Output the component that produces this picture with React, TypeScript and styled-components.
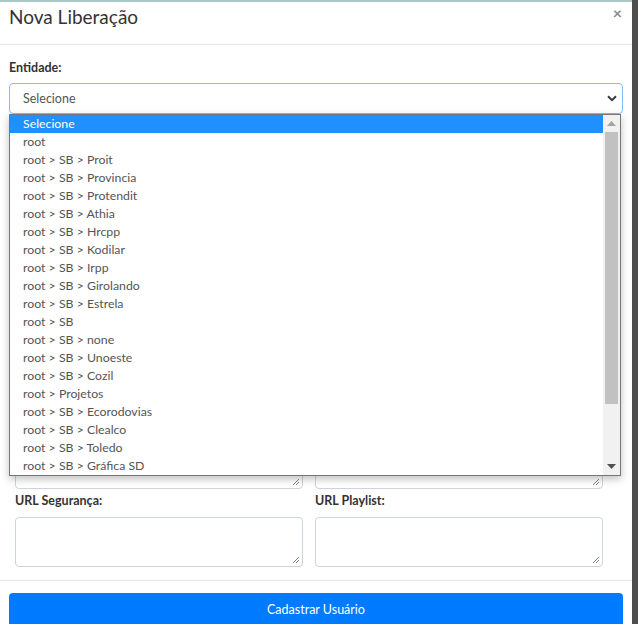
import React from 'react'
import styled, { createGlobalStyle } from 'styled-components'

const GlobalStyle = createGlobalStyle`
    html, body {
        margin: 0;
        padding: 0;
        background: #4e4e4e;
        font-family: 'Lato', 'Open Sans', sans-serif;
        color: #333;
    }
    * { box-sizing: border-box; }
`

const Modal = styled.div`
    position: relative;
    width: 632px;
    height: 624px;
    background: #fff;
    border-top: 2px solid #a9c6c9;
    overflow: hidden;
`

const Header = styled.div`
    display: flex;
    justify-content: space-between;
    align-items: flex-start;
    height: 43px;
    padding: 3px 10px 0 9px;
    border-bottom: 1px solid #e5e5e5;

    h4 {
        margin: 0;
        font-size: 19px;
        font-weight: 400;
        color: #333;
        line-height: 24px;
    }
`

const Close = styled.span`
    font-size: 16px;
    font-weight: 700;
    color: #8a8a8a;
    line-height: 14px;
    margin-top: 1px;
    cursor: pointer;
`

const Body = styled.div`
    position: relative;
    padding: 14px 9px 0 9px;
    height: 536px;
    border-bottom: 1px solid #e5e5e5;
`

const Label = styled.label`
    display: block;
    height: 18px;
    font-size: 12.5px;
    font-weight: 700;
    color: #333;
    line-height: 18px;
`

const Select = styled.div`
    margin-top: 6px;
    height: 31px;
    border: 1px solid #80bdff;
    border-radius: 4px;
    display: flex;
    align-items: center;
    justify-content: space-between;
    padding: 0 5px 0 13px;
    font-size: 12.5px;
    color: #555;
`

const Fields = styled.div`
    display: grid;
    grid-template-columns: 288px 288px;
    column-gap: 12px;
    padding: 1px 0 0 6px;
`

const Field = styled.div<{ wide?: boolean }>`
    display: flex;
    flex-direction: column;
    padding-bottom: 3px;
    grid-column: ${p => (p.wide ? '1 / span 2' : 'auto')};
    ${Label} {
        margin: 0 0 7px 0;
    }
`

const Input = styled.div`
    height: 31px;
    margin-bottom: 6px;
    border: 1px solid #ced4da;
    border-radius: 4px;
`

const TextArea = styled.div`
    height: 50px;
    border: 1px solid #ced4da;
    border-radius: 4px;
    position: relative;
`

const Grip = styled.svg`
    position: absolute;
    right: 2px;
    bottom: 2px;
`

const Dropdown = styled.div`
    position: absolute;
    left: 9px;
    top: 69px;
    width: 612px;
    height: 362px;
    background: #fff;
    border: 1px solid #767676;
    box-shadow: 0 3px 8px rgba(0, 0, 0, 0.25);
    display: flex;
`

const List = styled.ul`
    flex: 1;
    margin: 0;
    padding: 0;
    list-style: none;
`

const Option = styled.li<{ active?: boolean }>`
    height: 18px;
    line-height: 18px;
    padding-left: 13px;
    font-size: 12.3px;
    color: ${p => (p.active ? '#fff' : '#555')};
    background: ${p => (p.active ? '#1e90ff' : 'transparent')};
`

const Scrollbar = styled.div`
    width: 17px;
    background: #f1f1f1;
    display: flex;
    flex-direction: column;
    align-items: center;
    padding: 0 1px;
`

const Arrow = styled.div`
    height: 17px;
    width: 100%;
    display: flex;
    align-items: center;
    justify-content: center;
`

const Thumb = styled.div`
    width: 13px;
    height: 272px;
    background: #c1c1c1;
`

const Track = styled.div`
    flex: 1;
`

const Footer = styled.div`
    padding: 12px 9px 0 9px;
`

const Button = styled.button`
    width: 100%;
    height: 34px;
    border: none;
    border-radius: 4px;
    background: #007bff;
    color: #fff;
    font-family: inherit;
    font-size: 12.5px;
    font-weight: 400;
    padding: 0 0 2px 0;
`

const options = [
    'Selecione',
    'root',
    'root > SB > Proit',
    'root > SB > Provincia',
    'root > SB > Protendit',
    'root > SB > Athia',
    'root > SB > Hrcpp',
    'root > SB > Kodilar',
    'root > SB > Irpp',
    'root > SB > Girolando',
    'root > SB > Estrela',
    'root > SB',
    'root > SB > none',
    'root > SB > Unoeste',
    'root > SB > Cozil',
    'root > Projetos',
    'root > SB > Ecorodovias',
    'root > SB > Clealco',
    'root > SB > Toledo',
    'root > SB > Gráfica SD',
]

// fields under the open dropdown are covered, only the last row shows
const fields = ['', '', '', '', '', '', '', '', 'URL Segurança:', 'URL Playlist:']

const GripIcon = () => (
    <Grip width="8" height="8" viewBox="0 0 8 8">
        <path d="M1 7L7 1M4 7L7 4" stroke="#777" strokeWidth="0.9" />
    </Grip>
)

const App: React.FC = () => {
    return <>
        <GlobalStyle />
        <Modal>
            <Header>
                <h4>Nova Liberação</h4>
                <Close>×</Close>
            </Header>
            <Body>
                <Label>Entidade:</Label>
                <Select>
                    <span>Selecione</span>
                    <svg width="10" height="7" viewBox="0 0 10 7">
                        <path d="M1 1.2L5 5.2L9 1.2" stroke="#343a40" strokeWidth="2" fill="none" />
                    </svg>
                </Select>
                <Fields>
                    <Field wide>
                        <Label />
                        <Input />
                    </Field>
                    {fields.map((f, i) => (
                        <Field key={i}>
                            <Label>{f}</Label>
                            <TextArea><GripIcon /></TextArea>
                        </Field>
                    ))}
                </Fields>
                <Dropdown>
                    <List>
                        {options.map((o, i) => <Option key={o} active={i === 0}>{o}</Option>)}
                    </List>
                    <Scrollbar>
                        <Arrow>
                            <svg width="9" height="5" viewBox="0 0 9 5"><path d="M0 5L4.5 0L9 5Z" fill="#a3a3a3" /></svg>
                        </Arrow>
                        <Thumb />
                        <Track />
                        <Arrow>
                            <svg width="9" height="5" viewBox="0 0 9 5"><path d="M0 0L4.5 5L9 0Z" fill="#505050" /></svg>
                        </Arrow>
                    </Scrollbar>
                </Dropdown>
            </Body>
            <Footer>
                <Button>Cadastrar Usuário</Button>
            </Footer>
        </Modal>
    </>
}

export default App
